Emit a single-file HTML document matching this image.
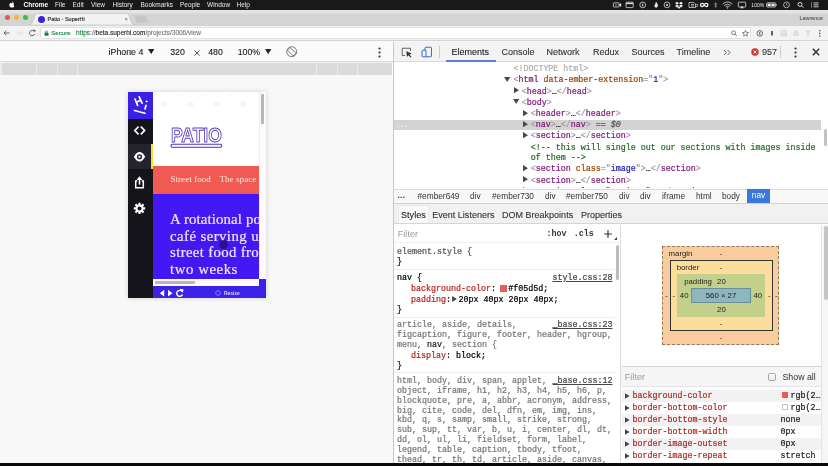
<!DOCTYPE html>
<html>
<head>
<meta charset="utf-8">
<style>
*{box-sizing:border-box;margin:0;padding:0}
html,body{width:828px;height:466px;overflow:hidden;background:#fff;font-family:"Liberation Sans",sans-serif;}
.a{position:absolute;white-space:nowrap}
#root{position:absolute;left:0;top:0;width:828px;height:466px;overflow:hidden;will-change:transform;transform:translateZ(0)}
#menubar{left:0;top:0;width:828px;height:9.7px;background:#191919;color:#e9e9e9;font-size:6.5px;line-height:9.6px}
#menubar span{position:absolute;top:0}
#tabstrip{left:0;top:9.6px;width:828px;height:16px;background:#d4d4d4}
#urlbar{left:0;top:25.6px;width:828px;height:15.9px;background:#f3f3f3;border-bottom:1px solid #d4d4d4}
#devbar{left:0;top:42px;width:393px;height:20px;background:#fafafa;-webkit-text-stroke:.12px;font-size:8.8px;line-height:20px;color:#222}
#ruler{left:0;top:63.400px;width:392px;height:11.500px;background:#dbdbdb}
#ruler i{position:absolute;top:0;width:.8px;height:12px;background:#ebebeb}
#dt{left:393px;top:42px;width:435px;height:424px;background:#fff;border-left:1px solid #c8c8c8}
#dtbar{left:0;top:0;width:435px;height:20px;-webkit-text-stroke:.1px;background:#f3f3f3;border-bottom:1px solid #dadada;font-size:9px;line-height:20px;color:#333}
.mono{font-family:"Liberation Mono",monospace;font-size:8.33px;-webkit-text-stroke:.22px}
.tag{color:#7d1579}.an{color:#994500}.av{color:#1a1aa6}.cm{color:#236e25}.gr{color:#adadad}
.prop{color:#b8261e}
.tag b{font-weight:normal;color:#a894a6}
</style>
</head>
<body>
<div id="root">
<!-- mac menubar -->
<div id="menubar" class="a">
 <span style="left:23.5px;font-weight:bold;color:#fff">Chrome</span>
 <span style="left:55px">File</span>
 <span style="left:72.5px">Edit</span>
 <span style="left:91px">View</span>
 <span style="left:112.5px">History</span>
 <span style="left:140.5px">Bookmarks</span>
 <span style="left:180px">People</span>
 <span style="left:207px">Window</span>
 <span style="left:236.5px">Help</span>
<svg class="a" style="left:608px;top:0" width="220" height="10" viewBox="0 0 220 10"><g fill="none" stroke="#e4e4e4" stroke-width=".75">
<rect x="5.400" y="2.800" width="5.600" height="4.200" rx=".6"/><path d="M11.300 4.600 L13 3.500 V6.500 L11.300 5.400 Z" fill="#e4e4e4" stroke-width=".4"/><circle cx="8" cy="4.900" r=".7" fill="#e4e4e4" stroke="none"/>
<rect x="18" y="2.200" width="7.200" height="5.400" rx=".5"/><path d="M18 3.500 H25.200" stroke-width="1.200"/>
<circle cx="34.700" cy="4.900" r="2.900"/><path d="M34.700 3.500 V6.300" stroke-width="1"/>
<path d="M48 1.800 C49.600 3.400 50.200 5 49.700 6.500 C49.200 8 47 8 46.500 6.500 C46.200 5.300 47.500 4.300 48 1.800 Z" fill="#e8e8e8" stroke="none"/>
<circle cx="59" cy="4.900" r="2.900"/><circle cx="59" cy="4.900" r="1" fill="#e4e4e4" stroke="none"/>
<path d="M69 1.800 L71 3.200 L69 4.600 L67 3.200 Z M73 1.800 L75 3.200 L73 4.600 L71 3.200 Z M69 4.600 L71 6 L69 7.400 L67 6 Z M73 4.600 L75 6 L73 7.400 L71 6 Z M71 6.600 L72.600 7.700 L71 8.800 L69.400 7.700 Z" fill="#ececec" stroke="none"/>
<path d="M81 2.500 H85.500 L87.500 4 V7.500 H81 Z M83 4.500 H86 M83 6 H86" stroke-width=".7"/><path d="M87.500 4.500 H89.500 V6.500 H87.500" stroke-width=".6"/>
<path d="M92.500 4.900 C92.500 2.800 95.500 2.800 96.200 4.900 C96.900 7 99.900 7 99.900 4.900 C99.900 2.800 96.900 2.800 96.200 4.900 C95.500 7 92.500 7 92.500 4.900 Z" stroke-width="1.300" stroke="#f0f0f0"/>
<path d="M107.700 2.400 V7.600 M106 4 H109.400 M106.500 6.200 H109" stroke-width=".6" stroke="#bbb"/>
<path d="M114.600 4 Q119.500 -.2 124.400 4 M116.200 5.500 Q119.500 2.700 122.800 5.500 M117.800 6.900 Q119.500 5.500 121.200 6.900" stroke-width=".8" stroke="#d8d8d8"/><circle cx="119.500" cy="7.900" r=".6" fill="#e4e4e4" stroke="none"/>
<rect x="130.300" y="2.200" width="7.400" height="4.800" rx=".4"/><path d="M132.200 8.200 L134 6 L135.800 8.200 Z" fill="#e4e4e4" stroke="none"/>
<rect x="158.600" y="2.800" width="9" height="4.200" rx=".7"/><rect x="159.500" y="3.600" width="3.300" height="2.600" fill="#e8e8e8" stroke="none"/><rect x="163.400" y="3.600" width="3.300" height="2.600" fill="#e8e8e8" stroke="none"/><path d="M168.400 4.200 V5.600" stroke-width=".8"/>
<circle cx="178.500" cy="4.900" r="2.900" stroke-width=".7"/><path d="M178.500 3.300 V5 L179.700 5.700" stroke-width=".55"/>
<circle cx="192" cy="4.400" r="2" stroke-width=".9"/><path d="M193.500 5.900 L195.300 7.700" stroke-width="1"/>
<path d="M203 3 H204 M205.500 3 H210.500 M203 4.900 H204 M205.500 4.900 H210.500 M203 6.800 H204 M205.500 6.800 H210.500" stroke-width=".85"/>
</g><text x="143.300" y="6.800" font-family="Liberation Sans" font-size="5.100" fill="#e8e8e8">100%</text></svg>
</div>
<svg class="a" style="left:9.2px;top:0.6px" width="5.8" height="7" viewBox="1 0 14 18"><path fill="#fff" d="M12.2 9.6c0-2 1.6-2.9 1.7-3-1-1.4-2.400-1.600-2.900-1.600-1.200-.1-2.400.7-3 .7-.6 0-1.600-.7-2.600-.7C4 5 2.800 5.800 2.100 7c-1.400 2.400-.4 6 1 8 .7 1 1.500 2 2.500 2 1 0 1.400-.6 2.600-.6 1.200 0 1.500.6 2.600.6 1.100 0 1.800-1 2.400-1.900.800-1.100 1.100-2.200 1.100-2.200s-2.100-.800-2.100-3.300zM10.300 3.600c.5-.700.900-1.600.800-2.600-.800 0-1.800.5-2.300 1.200-.5.600-.9 1.500-.8 2.400.9.100 1.800-.400 2.300-1z"/></svg>
<div id="tabstrip" class="a">
 <div class="a" style="left:0;top:0;width:828px;height:4.500px;background:linear-gradient(#e8e8e8,#dcdcdc)"></div>
 <svg class="a" style="left:28px;top:3.7px" width="122" height="12" viewBox="0 0 122 12"><path d="M0 12 C3 12 4 11 5 8 L7 2.500 C7.600 1 8.500 .5 10 .5 L98 .5 C99.500 .5 100.400 1 101 2.500 L103 8 C104 11 105 12 108 12 Z" fill="#f2f2f2" stroke="#bdbdbd" stroke-width=".6"/><path d="M106.6 2.6 L118 2.6 L120.2 10 L108.8 10 Z" fill="#c6c6c6"/></svg>
 <i class="a" style="left:4.700px;top:5.4px;width:5.400px;height:5.400px;border-radius:50%;background:#f2514c"></i>
 <i class="a" style="left:13.600px;top:5.4px;width:5.400px;height:5.400px;border-radius:50%;background:#f5b62f"></i>
 <i class="a" style="left:22.600px;top:5.4px;width:5.400px;height:5.400px;border-radius:50%;background:#39c03f"></i>
 <i class="a" style="left:37.700px;top:6.4px;width:7px;height:7px;border-radius:50%;background:#3a22d8"></i>
 <span class="a" style="left:47.500px;top:4.7px;font-size:5.5px;line-height:10px;color:#2a2a2a;-webkit-text-stroke:.15px">Patio - SuperHi</span>
 <span class="a" style="left:124.500px;top:4.5px;font-size:6px;line-height:10px;color:#666">×</span>
 <span class="a" style="left:799.500px;top:3.3px;font-size:5.400px;line-height:10px;color:#333">Lawrence</span>
</div>
<div class="a" style="left:0;top:41px;width:828px;height:2px;background:#f6f6f6"></div>
<div id="urlbar" class="a">
 <div class="a" style="left:39.500px;top:1.9px;width:711px;height:12px;background:#fff;border-radius:2px;border:.5px solid #e2e2e2"></div>
 <svg class="a" style="left:3px;top:3.4px" width="34" height="8" viewBox="0 0 34 8"><g fill="none" stroke="#555" stroke-width=".9"><path d="M1 4 H6.500 M3.300 1.700 L1 4 L3.300 6.300"/><path stroke="#dadada" d="M14 4 H19.500 M17.200 1.700 L19.500 4 L17.200 6.300"/><path d="M31.200 2.500 A2.600 2.600 0 1 0 31.600 5"/><path fill="#555" stroke="none" d="M29.800 .8 L32.300 .8 L32.300 3.300 Z"/></g></svg>
 <svg class="a" style="left:44px;top:4.4px" width="5" height="6" viewBox="0 0 10 12"><rect x="1" y="5" width="8" height="6.500" rx="1" fill="#188038"/><path d="M3 5 V3.500 a2 2 0 0 1 4 0 V5" fill="none" stroke="#188038" stroke-width="1.400"/></svg>
 <span class="a" style="left:51.3px;top:2.6px;font-size:6.1px;line-height:10px;color:#15803a;-webkit-text-stroke:.1px">Secure</span>
 <span class="a" style="left:76px;top:2.7px;font-size:6.5px;line-height:10px;color:#777;-webkit-text-stroke:.12px"><span style="color:#188038">https</span>://<span style="color:#222">beta.superhi.com</span>/projects/3006/view</span>
<svg class="a" style="left:728px;top:1.4px" width="100" height="13" viewBox="0 0 100 13"><g fill="none" stroke="#555" stroke-width=".8">
<circle cx="5.600" cy="5.800" r="1.900"/><path d="M7 7.200 L8.800 9"/>
<path d="M17.500 3.300 L18.400 5.400 L20.600 5.600 L18.900 7.100 L19.400 9.300 L17.500 8.100 L15.600 9.300 L16.100 7.100 L14.400 5.600 L16.600 5.400 Z" stroke-width=".7"/>
<circle cx="31.800" cy="6.400" r="2.800" stroke="#444"/><path d="M31.800 4.900 V7.900" stroke="#444" stroke-width="1"/>
<path d="M44 4 V8.500" stroke="#333" stroke-width="1.500"/>
<rect x="53" y="3.500" width="5.500" height="5.500" stroke="#d8d8d8" fill="#e2e2e2"/>
<path d="M66 3.500 L70 3.500 L71 9 L65 9 Z" stroke="none" fill="#dedede"/>
<path d="M78 4 H82 L80 7 Z M79 8.500 H81.500" stroke="#d4d4d4" fill="#dcdcdc"/>
</g><circle cx="91.800" cy="3.800" r=".8" fill="#555"/><circle cx="91.800" cy="6.400" r=".8" fill="#555"/><circle cx="91.800" cy="9" r=".8" fill="#555"/></svg>
</div>
<div id="devbar" class="a">
 <span class="a" style="left:108.6px;top:.1px">iPhone 4</span>
 <svg class="a" style="left:147.800px;top:6.800px" width="6.400" height="5.200" viewBox="0 0 6 5"><path d="M0 0 H6 L3 5 Z" fill="#222"/></svg>
 <span class="a" style="left:170.2px;top:.1px">320</span>
 <svg class="a" style="left:193.600px;top:7.800px" width="6" height="6" viewBox="0 0 6 6"><path d="M.4 .4 L5.600 5.600 M5.600 .4 L.4 5.600" stroke="#444" stroke-width=".9"/></svg>
 <span class="a" style="left:208.2px;top:.1px">480</span>
 <span class="a" style="left:237.7px;top:.1px">100%</span>
 <svg class="a" style="left:265.200px;top:6.800px" width="6.400" height="5.200" viewBox="0 0 6 5"><path d="M0 0 H6 L3 5 Z" fill="#222"/></svg>
 <svg class="a" style="left:286.300px;top:4.200px" width="11.400" height="11.400" viewBox="0 0 22 22"><g fill="none" stroke="#555" stroke-width="1.500"><circle cx="11" cy="11" r="9.600"/><path d="M8 2.800 L19.200 14 L14 19.200 L2.800 8 Z"/></g></svg>
 <svg class="a" style="left:377.500px;top:4.500px" width="3" height="11" viewBox="0 0 3 11"><circle cx="1.500" cy="1.500" r="1.100" fill="#333"/><circle cx="1.500" cy="5.500" r="1.100" fill="#333"/><circle cx="1.500" cy="9.500" r="1.100" fill="#333"/></svg>
</div>
<div class="a" style="left:0;top:61px;width:393px;height:1.200px;background:#dcdcdc"></div><div class="a" style="left:0;top:62.200px;width:393px;height:1.300px;background:#f0f0f0"></div>
<div class="a" style="left:0;top:75px;width:393px;height:391px;background:#f8f8f8"></div>
<div id="device" class="a" style="left:128px;top:92px;width:138px;height:206.4px;background:#fff;overflow:hidden;box-shadow:0 0 5px rgba(0,0,0,.16)">
 <!-- sidebar -->
 <div class="a" style="left:0;top:0;width:25.1px;height:206px;background:#14141a"></div>
 <div class="a" style="left:0;top:0;width:25.1px;height:26.500px;background:#3a20e2"></div>
 <div class="a" style="left:0;top:52px;width:25.1px;height:25.200px;background:#24242f"></div>
 <div class="a" style="left:23.1px;top:52px;width:2px;height:25.2px;background:#f6e22a"></div>
 <svg class="a" style="left:0;top:0" width="26" height="130" viewBox="0 0 26 130">
  <g fill="none" stroke="#fff" stroke-width="1.500" stroke-linecap="round" stroke-linejoin="round">
   <!-- Hi logo -->
   <path d="M7 7 L9.600 13.400 M11.200 4.800 L14.100 11.200 M8.300 10.200 L12.700 8.300" stroke-width="1.700"/>
   <path d="M18 13.400 L17 17" stroke-width="1.700"/><circle cx="18.600" cy="9.400" r=".55" fill="#fff" stroke-width=".9"/>
   <path d="M6.400 18.500 L17 21.300" stroke-width="1.600"/>
   <!-- code -->
   <path d="M10 35.200 L6.800 38.500 L10 41.800 M13.400 35.200 L16.600 38.500 L13.400 41.800" stroke-width="1.700" stroke-linecap="square" stroke-linejoin="miter"/>
  </g>
  <!-- eye -->
  <path d="M5.900 64.800 C7.800 61 10 60.100 11.500 60.100 C13 60.100 15.200 61 17.100 64.800 C15.200 68.600 13 69.500 11.500 69.500 C10 69.500 7.800 68.600 5.900 64.800 Z" fill="#fff"/>
  <circle cx="11.500" cy="64.800" r="2.600" fill="#24242f"/><circle cx="11.500" cy="64.800" r="1.150" fill="#fff"/>
  <!-- share -->
  <g fill="none" stroke="#fff" stroke-width="1.500"><path d="M9.200 89 H7.700 V95.800 H15.300 V89 H13.800" stroke-linejoin="miter"/><path d="M11.500 92.600 V86"/></g>
  <path d="M8.500 87.900 L11.500 84.200 L14.500 87.900 Z" fill="#fff"/>
  <!-- gear -->
  <g transform="translate(11.500,116.400)"><g stroke="#fff" stroke-width="2.200"><path d="M0 -5.700 V5.700 M-5.700 0 H5.700 M-4.030 -4.030 L4.030 4.030 M4.030 -4.030 L-4.030 4.030"/></g><circle r="3.900" fill="#fff"/><circle r="2" fill="#14141a"/></g>
 </svg>
 <!-- page -->
 <div class="a" style="left:33.0px;top:9.0px;width:7px;height:5.6px;border-radius:45% 45% 50% 50%;background:#f6f6f6"></div>
 <div class="a" style="left:59.1px;top:9.5px;width:7px;height:5.6px;border-radius:45% 45% 50% 50%;background:#f6f6f6"></div>
 <div class="a" style="left:85.2px;top:9.0px;width:7px;height:5.6px;border-radius:45% 45% 50% 50%;background:#f6f6f6"></div>
 <div class="a" style="left:111.3px;top:9.0px;width:7px;height:5.6px;border-radius:45% 45% 50% 50%;background:#f6f6f6"></div>
 <div class="a" style="left:49.0px;top:2.1px;width:4px;height:3px;border-radius:50%;background:#f8f8f8"></div>
 <div class="a" style="left:75.0px;top:2.1px;width:4px;height:3px;border-radius:50%;background:#f8f8f8"></div>
 <div class="a" style="left:101.0px;top:2.1px;width:4px;height:3px;border-radius:50%;background:#f8f8f8"></div>
 <svg class="a" style="left:40px;top:32.300px" width="56" height="25" viewBox="0 0 56 25">
  <text x="2.9" y="17.55" font-family="Liberation Sans" font-weight="bold" font-size="20.3" textLength="51" lengthAdjust="spacingAndGlyphs" fill="#fff" stroke="#5a3fb8" stroke-width=".95" stroke-linejoin="round">PATIO</text>
  <rect x="3" y="20.3" width="50.6" height="3" rx="1.2" fill="#fff" stroke="#5233b6" stroke-width="1.1"/>
 </svg>
 <div class="a" style="left:25.1px;top:73.5px;width:105.9px;height:28.300px;background:#ef5b52"></div>
 <div class="a" style="left:42.400px;top:82.400px;font-family:'Liberation Serif',serif;font-size:9.200px;line-height:10px;color:#fbe3e0">Street food</div>
 <div class="a" style="left:91.4px;top:82.4px;font-family:'Liberation Serif',serif;font-size:9.200px;line-height:10px;color:#fbe3e0">The space</div>
 <div class="a" style="left:25.1px;top:101.8px;width:105.9px;height:86.500px;background:#4418f4;overflow:hidden">
  <div class="a" style="left:17px;top:17.300px;font-family:'Liberation Serif',serif;font-size:14.8px;letter-spacing:.14px;line-height:16.5px;color:#f1e4fa;-webkit-text-stroke:.22px;white-space:pre">A rotational pop-up
<span style="letter-spacing:.42px">café serving up</span>
<span style="letter-spacing:.34px">street food from</span>
<span style="letter-spacing:.55px">two weeks</span></div>
  <div class="a" style="left:66.300px;top:46.300px;width:9px;height:9px;border-radius:50%;background:rgba(30,20,110,.8)"></div>
 </div>
 <!-- v scrollbar -->
 <div class="a" style="left:131px;top:0;width:7px;height:187.4px;background:#fbfbfb;border-left:.5px solid #ededed"></div><div class="a" style="left:131px;top:187.4px;width:7px;height:20px;background:#3c21e6"></div>
 <div class="a" style="left:133.1px;top:1.6px;width:2.9px;height:30.4px;background:#b6b6b6;border-radius:.8px"></div>
 <!-- h scrollbar -->
 <div class="a" style="left:25.1px;top:186.6px;width:105.9px;height:7.4px;background:#fbfbfb"></div>
 <div class="a" style="left:27px;top:188.9px;width:40px;height:3px;background:#b8b8b8;border-radius:.5px"></div>
 <!-- bottom bar -->
 <div class="a" style="left:25.1px;top:194px;width:112.9px;height:12.5px;background:#3c21e6"></div>
 <svg class="a" style="left:25.5px;top:194.5px" width="112" height="12" viewBox="0 0 112 12">
  <path d="M10.2 2.800 V9.600 L5.800 6.200 Z M14 2.800 V9.600 L18.400 6.200 Z" fill="#fff"/>
  <path d="M28.200 4.700 A3 3 0 1 0 28.500 7.400" fill="none" stroke="#fff" stroke-width="1.400"/><path d="M25.800 1.800 L29.400 2.200 L29 5.800 Z" fill="#fff"/>
  <circle cx="64" cy="6" r="2.300" fill="none" stroke="#8f86ee" stroke-width=".9"/>
  <text x="70" y="7.900" font-family="Liberation Sans" font-weight="bold" font-size="4.950" fill="#d9d5fa">Resize</text>
 </svg>
</div>
<div id="ruler" class="a"><i style="left:35.500px"></i><i style="left:56.500px"></i><i style="left:77px"></i><i style="left:316px"></i><i style="left:336.500px"></i><i style="left:356.500px"></i><i style="left:0;width:1.500px"></i></div>
<div id="dt" class="a">
<div id="tree" class="a" style="left:0;top:0;width:434px;height:146.2px;overflow:hidden">
<div class="a" style="left:0;top:77.8px;width:427px;height:10.3px;background:#d3d3d3"></div>
<div class="a mono" style="left:119.4px;top:21.8px;line-height:11px;"><span class="gr">&lt;!DOCTYPE html&gt;</span></div>
<svg class="a" style="left:110.4px;top:34.9px" width="6.4" height="5" viewBox="0 0 5 4"><path d="M0 0 H5 L2.500 4 Z" fill="#4a4a4a"/></svg>
<div class="a mono" style="left:119.4px;top:33.3px;line-height:11px;"><span class="tag"><b>&lt;</b>html <span class="an">data-ember-extension</span><b>="</b><span class="av">1</span><b>"&gt;</b></span></div>
<svg class="a" style="left:120.4px;top:45.2px" width="5" height="6.4" viewBox="0 0 4 5"><path d="M0 0 V5 L4 2.500 Z" fill="#4a4a4a"/></svg>
<div class="a mono" style="left:127.7px;top:44.5px;line-height:11px;"><span class="tag"><b>&lt;</b>head<b>&gt;</b></span>…<span class="tag"><b><b>&lt;</b>/</b>head<b>&gt;</b></span></div>
<svg class="a" style="left:119.4px;top:57.4px" width="6.4" height="5" viewBox="0 0 5 4"><path d="M0 0 H5 L2.500 4 Z" fill="#4a4a4a"/></svg>
<div class="a mono" style="left:127.7px;top:55.8px;line-height:11px;"><span class="tag"><b>&lt;</b>body<b>&gt;</b></span></div>
<svg class="a" style="left:128.9px;top:67.5px" width="5" height="6.4" viewBox="0 0 4 5"><path d="M0 0 V5 L4 2.500 Z" fill="#4a4a4a"/></svg>
<div class="a mono" style="left:136.7px;top:66.8px;line-height:11px;"><span class="tag"><b>&lt;</b>header<b>&gt;</b></span>…<span class="tag"><b><b>&lt;</b>/</b>header<b>&gt;</b></span></div>
<svg class="a" style="left:128.9px;top:78.8px" width="5" height="6.4" viewBox="0 0 4 5"><path d="M0 0 V5 L4 2.500 Z" fill="#4a4a4a"/></svg>
<div class="a mono" style="left:136.7px;top:78.1px;line-height:11px;"><span class="tag"><b>&lt;</b>nav<b>&gt;</b></span>…<span class="tag"><b><b>&lt;</b>/</b>nav<b>&gt;</b></span> <span style="color:#555">== <i>$0</i></span></div>
<div class="a mono" style="left:1.7px;top:78.1px;line-height:11px;"><span style="color:#efefef;letter-spacing:-1px">...</span></div>
<svg class="a" style="left:128.9px;top:90.1px" width="5" height="6.4" viewBox="0 0 4 5"><path d="M0 0 V5 L4 2.500 Z" fill="#4a4a4a"/></svg>
<div class="a mono" style="left:136.7px;top:89.4px;line-height:11px;"><span class="tag"><b>&lt;</b>section<b>&gt;</b></span>…<span class="tag"><b><b>&lt;</b>/</b>section<b>&gt;</b></span></div>
<div class="a mono" style="left:136.7px;top:100.6px;line-height:11px;"><span class="cm">&lt;!-- this will single out our sections with images inside</span></div>
<div class="a mono" style="left:136.7px;top:111.1px;line-height:11px;"><span class="cm">of them --&gt;</span></div>
<svg class="a" style="left:128.9px;top:123.0px" width="5" height="6.4" viewBox="0 0 4 5"><path d="M0 0 V5 L4 2.500 Z" fill="#4a4a4a"/></svg>
<div class="a mono" style="left:136.7px;top:122.3px;line-height:11px;"><span class="tag"><b>&lt;</b>section <span class="an">class</span><b>="</b><span class="av">image</span><b>"&gt;</b></span>…<span class="tag"><b><b>&lt;</b>/</b>section<b>&gt;</b></span></div>
<svg class="a" style="left:128.9px;top:134.2px" width="5" height="6.4" viewBox="0 0 4 5"><path d="M0 0 V5 L4 2.500 Z" fill="#4a4a4a"/></svg>
<div class="a mono" style="left:136.7px;top:133.5px;line-height:11px;"><span class="tag"><b>&lt;</b>section<b>&gt;</b></span>…<span class="tag"><b><b>&lt;</b>/</b>section<b>&gt;</b></span></div>
<svg class="a" style="left:128.9px;top:145.4px" width="5" height="6.4" viewBox="0 0 4 5"><path d="M0 0 V5 L4 2.500 Z" fill="#4a4a4a"/></svg>
<div class="a mono" style="left:136.7px;top:144.7px;line-height:11px;"><span class="tag"><b>&lt;</b>section class="reviews"<b>&gt;</b></span>…<span class="tag"><b><b>&lt;</b>/</b>section<b>&gt;</b></span></div>
<div class="a" style="left:429.5px;top:86.5px;width:3.4px;height:17.5px;background:#c2c2c2;border-radius:2px"></div>
</div>
<div id="bc" class="a" style="left:0;top:146.8px;width:434px;height:14.8px;background:#f8f8f8;border-top:1px solid #dcdcdc;border-bottom:1px solid #cfcfcf;font-size:8.300px;line-height:12.500px;color:#333">
<span class="a" style="left:3.5px;top:-.5px;font-weight:bold;letter-spacing:.3px">...</span><span class="a" style="left:23.5px;top:0;">#ember649</span><span class="a" style="left:76.0px;top:0;">div</span><span class="a" style="left:98.0px;top:0;">#ember730</span><span class="a" style="left:151.0px;top:0;">div</span><span class="a" style="left:172.0px;top:0;">#ember750</span><span class="a" style="left:225.0px;top:0;">div</span><span class="a" style="left:246.0px;top:0;">div</span><span class="a" style="left:268.0px;top:0;">iframe</span><span class="a" style="left:302.0px;top:0;">html</span><span class="a" style="left:328.0px;top:0;">body</span><span class="a" style="left:353px;top:-.6px;width:23px;height:13.6px;line-height:13.6px;background:#3b78dc;color:#fff;text-align:center">nav</span>
</div>
<div id="styles">
<div class="a" style="left:0;top:161.5px;width:434px;height:20.4px;background:#f1f1f1;border-bottom:1px solid #d6d6d6"></div>
<div class="a" style="left:4px;top:163.3px;width:30.5px;height:18.2px;background:#fafafa;border:.6px solid #e9e9e9;border-bottom:none"></div>
<div class="a " style="left:7.0px;top:167.5px;line-height:10px;font-family:'Liberation Sans',sans-serif;font-size:9.1px;color:#222;-webkit-text-stroke:.1px">Styles</div>
<div class="a " style="left:38.3px;top:167.5px;line-height:10px;-webkit-text-stroke:.1px;font-family:'Liberation Sans',sans-serif;font-size:9.03px;color:#333">Event Listeners</div>
<div class="a " style="left:108.0px;top:167.5px;line-height:10px;-webkit-text-stroke:.1px;font-family:'Liberation Sans',sans-serif;font-size:9.03px;color:#333">DOM Breakpoints</div>
<div class="a " style="left:186.9px;top:167.5px;line-height:10px;-webkit-text-stroke:.1px;font-family:'Liberation Sans',sans-serif;font-size:9.03px;color:#333">Properties</div>
<div class="a" style="left:225.8px;top:182.5px;width:1px;height:242px;background:#dadada"></div>
<div class="a" style="left:0;top:199.5px;width:226.5px;height:1px;background:#f1f1f1"></div>
<div class="a " style="left:3.8px;top:187.0px;line-height:10px;font-family:'Liberation Sans',sans-serif;font-size:9.1px;color:#9c9c9c">Filter</div>
<div class="a mono" style="left:152.4px;top:187.0px;line-height:10px;color:#333;font-weight:bold;-webkit-text-stroke:0">:hov</div>
<div class="a mono" style="left:179.8px;top:187.0px;line-height:10px;color:#333;font-weight:bold;-webkit-text-stroke:0">.cls</div>
<svg class="a" style="left:209.5px;top:188px" width="8" height="8" viewBox="0 0 8 8"><path d="M4 .2 V7.8 M.2 4 H7.8" stroke="#333" stroke-width="1.2"/></svg>
<svg class="a" style="left:220px;top:194.5px" width="3" height="3" viewBox="0 0 3 3"><path d="M3 0 V3 H0 Z" fill="#444"/></svg>
<div class="a" style="left:221.79999999999995px;top:203px;width:3.500px;height:35px;background:#bcbcbc;border-radius:2px"></div>
<div class="a mono" style="left:3.0px;top:204.6px;line-height:10px;"><span style="color:#555">element.style {</span></div>
<div class="a mono" style="left:3.0px;top:214.6px;line-height:10px;">}</div>
<div class="a" style="left:0;top:226.5px;width:221px;height:1px;background:#efefef"></div>
<div class="a mono" style="left:3.0px;top:230.8px;line-height:10px;">nav {</div>
<div class="a mono" style="left:158.5px;top:230.8px;line-height:10px;color:#444"><u>style.css:28</u></div>
<div class="a mono" style="left:17.0px;top:241.8px;line-height:10px;"><span class="prop">background-color</span>: <i style="display:inline-block;width:6.8px;height:6.8px;background:#ee5a55;vertical-align:-.9px;margin-right:1.2px;margin-left:-.6px"></i>#f05d5d;</div>
<div class="a mono" style="left:17.0px;top:252.6px;line-height:10px;"><span class="prop">padding</span>:<svg width="5" height="6" viewBox="0 0 4 5" style="margin:0 1.6px 0 .9px;vertical-align:-.6px"><path d="M0 0 V5 L4 2.500 Z" fill="#444"/></svg>20px 40px 20px 40px;</div>
<div class="a mono" style="left:3.0px;top:262.8px;line-height:10px;">}</div>
<div class="a" style="left:0;top:274.5px;width:221px;height:1px;background:#efefef"></div>
<div class="a mono" style="left:3.0px;top:278.2px;line-height:10px;"><span style="color:#777">article, aside, details,</span></div>
<div class="a mono" style="left:158.5px;top:278.2px;line-height:10px;color:#444"><u>_base.css:23</u></div>
<div class="a mono" style="left:3.0px;top:288.4px;line-height:10px;"><span style="color:#777">figcaption, figure, footer, header, hgroup,</span></div>
<div class="a mono" style="left:3.0px;top:297.7px;line-height:10px;"><span style="color:#777">menu, <span style="color:#222">nav</span>, section {</span></div>
<div class="a mono" style="left:17.0px;top:308.7px;line-height:10px;"><span class="prop">display</span>: block;</div>
<div class="a mono" style="left:3.0px;top:318.8px;line-height:10px;">}</div>
<div class="a" style="left:0;top:330px;width:221px;height:1px;background:#efefef"></div>
<div class="a mono" style="left:3.0px;top:333.7px;line-height:10px;"><span style="color:#777">html, body, div, span, applet,</span></div>
<div class="a mono" style="left:158.5px;top:333.7px;line-height:10px;color:#444"><u>_base.css:12</u></div>
<div class="a mono" style="left:3.0px;top:343.6px;line-height:10px;"><span style="color:#777">object, iframe, h1, h2, h3, h4, h5, h6, p,</span></div>
<div class="a mono" style="left:3.0px;top:353.5px;line-height:10px;"><span style="color:#777">blockquote, pre, a, abbr, acronym, address,</span></div>
<div class="a mono" style="left:3.0px;top:363.5px;line-height:10px;"><span style="color:#777">big, cite, code, del, dfn, em, img, ins,</span></div>
<div class="a mono" style="left:3.0px;top:373.4px;line-height:10px;"><span style="color:#777">kbd, q, s, samp, small, strike, strong,</span></div>
<div class="a mono" style="left:3.0px;top:383.3px;line-height:10px;"><span style="color:#777">sub, sup, tt, var, b, u, i, center, dl, dt,</span></div>
<div class="a mono" style="left:3.0px;top:393.2px;line-height:10px;"><span style="color:#777">dd, ol, ul, li, fieldset, form, label,</span></div>
<div class="a mono" style="left:3.0px;top:403.1px;line-height:10px;"><span style="color:#777">legend, table, caption, tbody, tfoot,</span></div>
<div class="a mono" style="left:3.0px;top:413.1px;line-height:10px;"><span style="color:#777">thead, tr, th, td, article, aside, canvas,</span></div>
</div>
<div id="computed">
<div class="a" style="left:268.4px;top:204.2px;width:117.0px;height:98.6px;background:#f9cc9d;border:.6px dashed #8f7a60"></div>
<div class="a" style="left:276.2px;top:218.2px;width:103.0px;height:70.6px;background:#fddd9b;border:.8px solid #333"></div>
<div class="a" style="left:283.3px;top:231.9px;width:87.8px;height:42.9px;background:#c3d08b;border:none"></div>
<div class="a" style="left:296.7px;top:246.2px;width:60.7px;height:14.6px;background:#8cb6c0;border:.5px solid #6f8f98"></div>
<div class="a " style="left:274.6px;top:207.0px;line-height:10px;font-family:'Liberation Sans',sans-serif;font-size:7.8px;color:#222">margin</div>
<div class="a" style="left:307.0px;top:207.0px;width:40px;text-align:center;line-height:10px;font-family:'Liberation Sans',sans-serif;font-size:7.8px;color:#222">-</div>
<div class="a " style="left:282.7px;top:221.0px;line-height:10px;font-family:'Liberation Sans',sans-serif;font-size:7.8px;color:#222">border</div>
<div class="a" style="left:307.0px;top:221.0px;width:40px;text-align:center;line-height:10px;font-family:'Liberation Sans',sans-serif;font-size:7.8px;color:#222">-</div>
<div class="a " style="left:290.2px;top:234.6px;line-height:10px;font-family:'Liberation Sans',sans-serif;font-size:7.8px;color:#222">padding</div>
<div class="a" style="left:307.4px;top:234.6px;width:40px;text-align:center;line-height:10px;font-family:'Liberation Sans',sans-serif;font-size:7.8px;color:#222">20</div>
<div class="a" style="left:270.2px;top:249.0px;width:40px;text-align:center;line-height:10px;font-family:'Liberation Sans',sans-serif;font-size:7.8px;color:#222">40</div>
<div class="a" style="left:307.0px;top:249.0px;width:40px;text-align:center;line-height:10px;font-family:'Liberation Sans',sans-serif;font-size:7.8px;color:#222">560 × 27</div>
<div class="a" style="left:343.8px;top:249.0px;width:40px;text-align:center;line-height:10px;font-family:'Liberation Sans',sans-serif;font-size:7.8px;color:#222">40</div>
<div class="a" style="left:307.4px;top:262.7px;width:40px;text-align:center;line-height:10px;font-family:'Liberation Sans',sans-serif;font-size:7.8px;color:#222">20</div>
<div class="a" style="left:307.0px;top:276.7px;width:40px;text-align:center;line-height:10px;font-family:'Liberation Sans',sans-serif;font-size:7.8px;color:#222">-</div>
<div class="a" style="left:307.0px;top:290.7px;width:40px;text-align:center;line-height:10px;font-family:'Liberation Sans',sans-serif;font-size:7.8px;color:#222">-</div>
<div class="a" style="left:252.5px;top:249.0px;width:40px;text-align:center;line-height:10px;font-family:'Liberation Sans',sans-serif;font-size:7.8px;color:#222">-</div>
<div class="a" style="left:259.8px;top:249.0px;width:40px;text-align:center;line-height:10px;font-family:'Liberation Sans',sans-serif;font-size:7.8px;color:#222">-</div>
<div class="a" style="left:355.2px;top:249.0px;width:40px;text-align:center;line-height:10px;font-family:'Liberation Sans',sans-serif;font-size:7.8px;color:#222">-</div>
<div class="a" style="left:362.2px;top:249.0px;width:40px;text-align:center;line-height:10px;font-family:'Liberation Sans',sans-serif;font-size:7.8px;color:#222">-</div>
<div class="a" style="left:427px;top:182.5px;width:7px;height:240px;background:#f6f6f6;border-left:1px solid #e4e4e4"></div>
<div class="a" style="left:430.4px;top:184px;width:3.2px;height:74px;background:#c4c4c4;border-radius:2px"></div>
<div class="a" style="left:226.8px;top:325.2px;width:200.2px;height:18.4px;background:#f5f5f5"></div>
<div class="a" style="left:227.5px;top:324.2px;width:200px;height:1px;background:#d4d4d4"></div>
<div class="a " style="left:230.8px;top:330.3px;line-height:10px;font-family:'Liberation Sans',sans-serif;font-size:9.1px;color:#9c9c9c">Filter</div>
<div class="a" style="left:374.5px;top:331.3px;width:8px;height:8px;margin:-.3px;border:.8px solid #a8a8a8;border-radius:1.8px;background:linear-gradient(#fff,#e8e8e8)"></div>
<div class="a " style="left:388.5px;top:330.3px;line-height:10px;font-family:'Liberation Sans',sans-serif;font-size:8.800px;color:#333">Show all</div>
<div class="a" style="left:227.5px;top:343.5px;width:200px;height:1px;background:#e6e6e6"></div>
<div class="a" style="left:227.5px;top:347.6px;width:199.500px;height:12px;background:#f2f2f2"></div>
<svg class="a" style="left:231.0px;top:350.5px" width="4.6" height="6" viewBox="0 0 4 5"><path d="M0 0 V5 L4 2.5 Z" fill="#444"/></svg>
<div class="a mono" style="left:238.5px;top:348.6px;line-height:10px;"><span style="color:#ad2b26">background-color</span></div>
<div class="a mono" style="left:387.5px;top:348.6px;line-height:10px;color:#222"><i style="display:inline-block;width:6.8px;height:6.8px;background:#ee5a55;vertical-align:-.8px;margin-right:2.2px"></i>rgb(2…</div>
<svg class="a" style="left:231.0px;top:362.6px" width="4.6" height="6" viewBox="0 0 4 5"><path d="M0 0 V5 L4 2.5 Z" fill="#444"/></svg>
<div class="a mono" style="left:238.5px;top:360.7px;line-height:10px;"><span style="color:#ad2b26">border-bottom-color</span></div>
<div class="a mono" style="left:387.5px;top:360.7px;line-height:10px;color:#222"><i style="display:inline-block;width:6.8px;height:6.8px;background:#fff;border:.5px solid #c4c4c4;vertical-align:-.8px;margin-right:2.2px"></i>rgb(2…</div>
<div class="a" style="left:227.5px;top:371.8px;width:199.500px;height:12px;background:#f2f2f2"></div>
<svg class="a" style="left:231.0px;top:374.7px" width="4.6" height="6" viewBox="0 0 4 5"><path d="M0 0 V5 L4 2.5 Z" fill="#444"/></svg>
<div class="a mono" style="left:238.5px;top:372.8px;line-height:10px;"><span style="color:#ad2b26">border-bottom-style</span></div>
<div class="a mono" style="left:386.4px;top:372.8px;line-height:10px;color:#222">none</div>
<svg class="a" style="left:231.0px;top:386.7px" width="4.6" height="6" viewBox="0 0 4 5"><path d="M0 0 V5 L4 2.5 Z" fill="#444"/></svg>
<div class="a mono" style="left:238.5px;top:384.8px;line-height:10px;"><span style="color:#ad2b26">border-bottom-width</span></div>
<div class="a mono" style="left:386.4px;top:384.8px;line-height:10px;color:#222">0px</div>
<div class="a" style="left:227.5px;top:395.9px;width:199.500px;height:12px;background:#f2f2f2"></div>
<svg class="a" style="left:231.0px;top:398.8px" width="4.6" height="6" viewBox="0 0 4 5"><path d="M0 0 V5 L4 2.5 Z" fill="#444"/></svg>
<div class="a mono" style="left:238.5px;top:396.9px;line-height:10px;"><span style="color:#ad2b26">border-image-outset</span></div>
<div class="a mono" style="left:386.4px;top:396.9px;line-height:10px;color:#222">0px</div>
<svg class="a" style="left:231.0px;top:410.9px" width="4.6" height="6" viewBox="0 0 4 5"><path d="M0 0 V5 L4 2.5 Z" fill="#444"/></svg>
<div class="a mono" style="left:238.5px;top:409.0px;line-height:10px;"><span style="color:#ad2b26">border-image-repeat</span></div>
<div class="a mono" style="left:386.4px;top:409.0px;line-height:10px;color:#222">stretch</div>
</div>
 <div id="dtbar" class="a">
 <svg class="a" style="left:7px;top:4.500px" width="12" height="11" viewBox="0 0 24 22"><path d="M8 17 H2.500 V2.500 H19 V8" fill="none" stroke="#555" stroke-width="1.800"/><path d="M10.500 8.500 L21.500 13 L17 14.800 L20.800 19.300 L18.800 21 L15 16.400 L12 20 Z" fill="#333"/></svg>
 <svg class="a" style="left:26.500px;top:4px" width="12" height="12" viewBox="0 0 24 24"><rect x="8" y="2.500" width="13" height="19" rx="1.500" fill="none" stroke="#3f68cf" stroke-width="2"/><rect x="2" y="8.500" width="8" height="13" rx="1" fill="#f3f3f3" stroke="#3f68cf" stroke-width="2"/></svg>
 <i class="a" style="left:44.500px;top:4px;width:1px;height:12px;background:#ccc"></i>
 <span class="a" style="left:57.6px;top:-.3px;color:#222">Elements</span>
 <span class="a" style="left:107.6px;top:-.3px">Console</span>
 <span class="a" style="left:152.6px;top:-.3px">Network</span>
 <span class="a" style="left:199.1px;top:-.3px">Redux</span>
 <span class="a" style="left:237.6px;top:-.3px">Sources</span>
 <span class="a" style="left:282.6px;top:-.3px">Timeline</span>
 <svg class="a" style="left:329px;top:6.500px" width="8" height="7" viewBox="0 0 16 14"><path d="M2 2 L7 7 L2 12 M9 2 L14 7 L9 12" fill="none" stroke="#555" stroke-width="1.800"/></svg>
 <i class="a" style="left:52.2px;top:18.3px;width:49.5px;height:1.8px;background:#5a7fd8"></i>
 <svg class="a" style="left:357.4px;top:6px" width="8" height="8" viewBox="0 0 16 16"><circle cx="8" cy="8" r="7.500" fill="#d9332e"/><path d="M5 5 L11 11 M11 5 L5 11" stroke="#fff" stroke-width="2"/></svg>
 <span class="a" style="left:367.9px;top:-.3px">957</span>
 <i class="a" style="left:386px;top:4px;width:1px;height:12px;background:#ccc"></i>
 <svg class="a" style="left:399.5px;top:4.500px" width="3" height="11" viewBox="0 0 3 11"><circle cx="1.500" cy="1.500" r="1.100" fill="#333"/><circle cx="1.500" cy="5.500" r="1.100" fill="#333"/><circle cx="1.500" cy="9.500" r="1.100" fill="#333"/></svg>
 <svg class="a" style="left:417.6px;top:6px" width="8" height="8" viewBox="0 0 8 8"><path d="M.8 .8 L7.200 7.200 M7.200 .8 L.8 7.200" stroke="#333" stroke-width="1.45"/></svg>
</div>
</div>
<div class="a" style="left:0;top:463.2px;width:828px;height:3px;background:#0a0a0a"></div>
</div>
</body>
</html>
